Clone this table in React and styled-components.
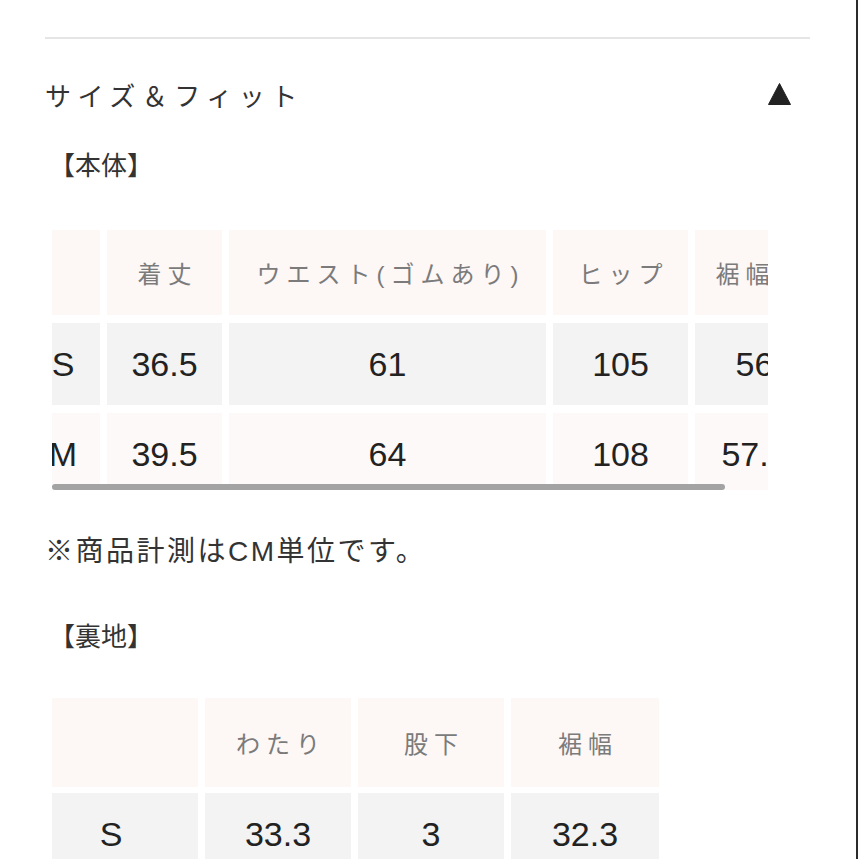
import React from "react";
import styled, { createGlobalStyle } from "styled-components";

const GlobalStyle = createGlobalStyle`
  html, body {
    margin: 0;
    padding: 0;
    background: #ffffff;
  }
  body {
    font-family: "Liberation Sans", "Noto Sans CJK JP", sans-serif;
    color: #333333;
  }
  * { box-sizing: border-box; }
`;

const Page = styled.div`
  width: 858px;
  height: 859px;
  overflow: hidden;
  border-right: 2px solid #2b2b2b;
  background: #ffffff;
`;

const Inner = styled.div`
  padding: 0 46px 0 45px;
  display: flex;
  flex-direction: column;
`;

const Divider = styled.div`
  margin-top: 37px;
  height: 2px;
  background: #e5e5e5;
`;

const TitleRow = styled.div`
  margin-top: 40px;
  height: 36px;
  display: flex;
  align-items: center;
  justify-content: space-between;
`;

const Title = styled.h2`
  margin: 0;
  font-size: 26px;
  line-height: 36px;
  font-weight: 400;
  letter-spacing: 6.5px;
  color: #333333;
`;

const Toggle = styled.svg`
  width: 23px;
  height: 22px;
  margin-right: 19px;
  margin-bottom: 6px;
  display: block;
`;

const SubHeading = styled.h3`
  margin: ${(p) => p.$top}px 0 0 0;
  padding-left: 4px;
  font-size: 26px;
  line-height: 34px;
  font-weight: 400;
  color: #333333;
`;

const ScrollArea = styled.div`
  position: relative;
  margin: 47px 0 0 7px;
  width: 716px;
  height: 260px;
  overflow: hidden;
`;

const Scrollbar = styled.div`
  position: absolute;
  left: 0;
  bottom: 0;
  width: 673px;
  height: 6px;
  border-radius: 3px;
  background: #a3a3a3;
`;

const Grid = styled.div`
  display: grid;
  grid-template-columns: ${(p) => p.$cols};
  grid-auto-rows: ${(p) => p.$rows};
  column-gap: 7px;
  row-gap: ${(p) => p.$rowGap}px;
  width: max-content;
`;

const Cell = styled.div`
  display: flex;
  align-items: center;
  justify-content: center;
  white-space: nowrap;
  background: ${(p) => p.$bg};
  padding-right: ${(p) => p.$padRight || 0}px;
`;

const HeadText = styled.span`
  font-size: 24px;
  letter-spacing: 6px;
  padding-left: 6px;
  color: #7b7b7b;
`;

const ValueText = styled.span`
  font-size: 34px;
  color: #222222;
`;

const Note = styled.p`
  margin: 44px 0 0 0;
  font-size: 28px;
  line-height: 36px;
  letter-spacing: 2.5px;
  color: #333333;
`;

const Table2Wrap = styled.div`
  margin: 44px 0 0 7px;
`;

const HEAD_BG = "#fdf7f6";
const GRAY_BG = "#f3f3f3";
const PINK_BG = "#fdf9f8";

const body = {
  headers: ["着丈", "ウエスト(ゴムあり)", "ヒップ", "裾幅"],
  headPad: [0, 0, 0, 24],
  rows: [
    { size: "S", values: ["36.5", "61", "105", "56"], bg: GRAY_BG },
    { size: "M", values: ["39.5", "64", "108", "57.5"], bg: PINK_BG },
  ],
};

const lining = {
  headers: ["わたり", "股下", "裾幅"],
  headPad: [0, 0, 0],
  rows: [{ size: "S", values: ["33.3", "3", "32.3"], bg: GRAY_BG }],
};

function SizeTable({ data, cols, rows, rowGap, firstPad }) {
  return (
    <Grid $cols={cols} $rows={rows} $rowGap={rowGap}>
      <Cell $bg={HEAD_BG} />
      {data.headers.map((h, i) => (
        <Cell key={h} $bg={HEAD_BG} $padRight={data.headPad[i]}>
          <HeadText>{h}</HeadText>
        </Cell>
      ))}
      {data.rows.map((r) => (
        <React.Fragment key={r.size}>
          <Cell $bg={r.bg} $padRight={firstPad}>
            <ValueText>{r.size}</ValueText>
          </Cell>
          {r.values.map((v, i) => (
            <Cell key={i} $bg={r.bg}>
              <ValueText>{v}</ValueText>
            </Cell>
          ))}
        </React.Fragment>
      ))}
    </Grid>
  );
}

export default function App() {
  return (
    <Page>
      <GlobalStyle />
      <Inner>
        <Divider />
        <TitleRow>
          <Title>サイズ＆フィット</Title>
          <Toggle viewBox="0 0 23 22" aria-hidden="true">
            <polygon points="11.5,0.5 22.5,21.5 0.5,21.5" fill="#222222" strokeLinejoin="round" stroke="#222222" strokeWidth="1" />
          </Toggle>
        </TitleRow>
        <SubHeading $top={34}>【本体】</SubHeading>
        <ScrollArea>
          <SizeTable
            data={body}
            cols="48px 115px 317px 135px 119px"
            rows="85px 82px 82px"
            rowGap={8}
            firstPad={26}
          />
          <Scrollbar />
        </ScrollArea>
        <Note>※商品計測はCM単位です。</Note>
        <SubHeading $top={50}>【裏地】</SubHeading>
        <Table2Wrap>
          <SizeTable
            data={lining}
            cols="146px 146px 146px 148px"
            rows="89px 82px"
            rowGap={6}
            firstPad={28}
          />
        </Table2Wrap>
      </Inner>
    </Page>
  );
}
